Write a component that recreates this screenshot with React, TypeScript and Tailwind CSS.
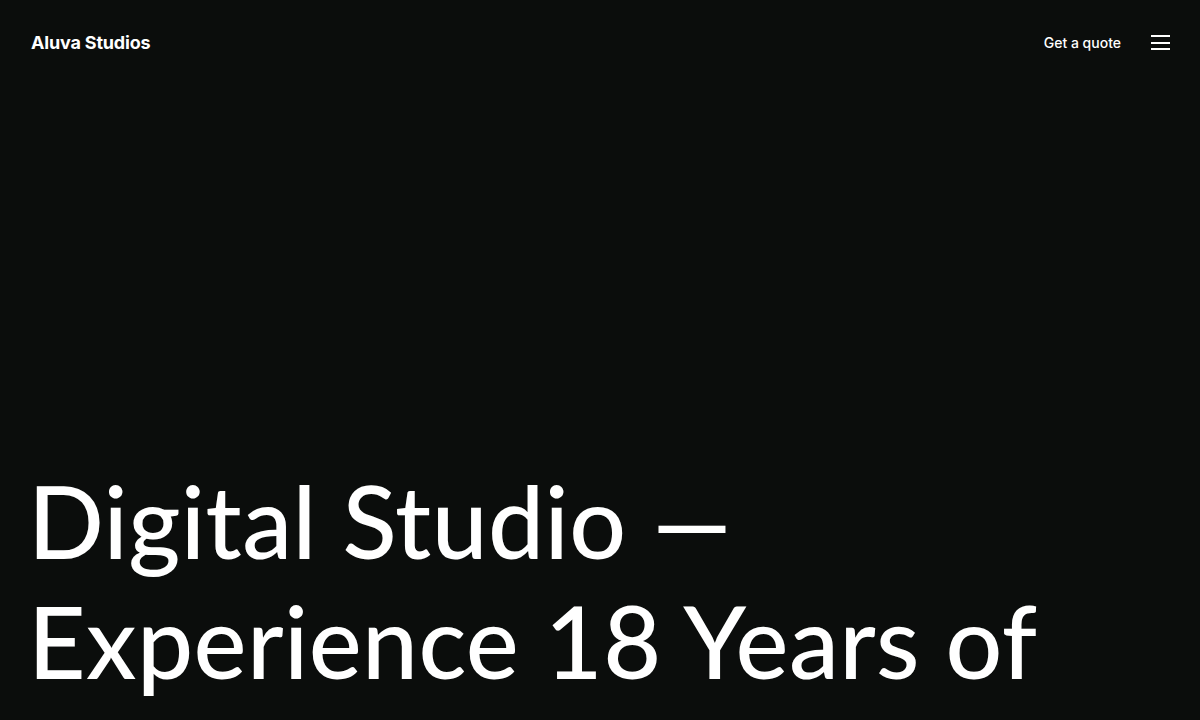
export default function App() {
  return (
    <div className="min-h-screen overflow-hidden bg-[#0b0d0c] text-white">
      <header className="flex items-center justify-between pl-[31px] pr-[29px] pt-[29px] pb-[32px]" style={{ fontFamily: "Inter, sans-serif" }}>
        <a className="text-[18px] font-bold tracking-[-0.01em]">Aluva Studios</a>
        <div className="flex items-center gap-[30px]">
          <a className="text-[14px] font-medium">Get a quote</a>
          <button className="flex h-[20px] w-[20px] flex-col justify-center gap-[4.5px]" aria-label="Menu">
            <span className="block h-[2px] w-[19px] bg-white" />
            <span className="block h-[2px] w-[19px] bg-white" />
            <span className="block h-[2px] w-[19px] bg-white" />
          </button>
        </div>
      </header>
      <section className="pl-[28px] pr-[30px] pt-[372px]">
        <h1 className="text-[100px] leading-[120px] font-medium tracking-[0.4px]" style={{ fontFamily: "Lato, sans-serif" }}>
          Digital Studio — Experience 18 Years of Creative Excellence
        </h1>
      </section>
    </div>
  );
}
